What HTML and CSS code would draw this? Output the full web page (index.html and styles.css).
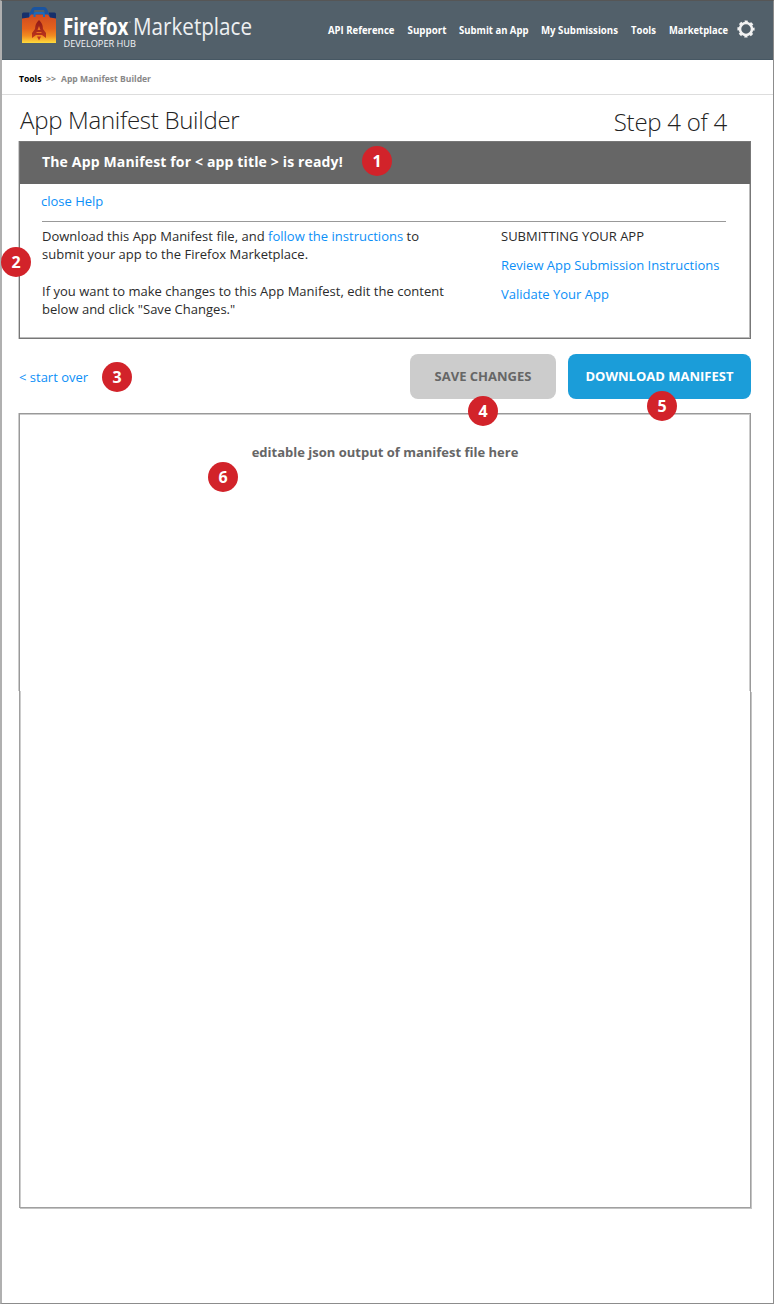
FILE: index.html
```html
<!DOCTYPE html>
<html lang="en">
<head>
<meta charset="utf-8">
<title>App Manifest Builder</title>
<link rel="stylesheet" href="styles.css">
</head>
<body>
<div class="page">
  <header class="masthead">
    <svg class="logo" width="240" height="50" viewBox="0 0 240 50">
      <defs>
        <linearGradient id="bag" x1="0" y1="0" x2="0" y2="1">
          <stop offset="0" stop-color="#cf4a20"/><stop offset=".5" stop-color="#e5631c"/><stop offset=".75" stop-color="#f28c20"/><stop offset="1" stop-color="#ffdc3c"/>
        </linearGradient>
        <linearGradient id="rocket" x1="0" y1="0" x2="0" y2="1">
          <stop offset="0" stop-color="#8e1a18"/><stop offset="1" stop-color="#c63a1c"/>
        </linearGradient>
      </defs>
      <path d="M1 14q0-1.500 1.500-1.500h6v7H1zM28 12.500h5.500q1.500 0 1.500 1.500v5.500h-7z" fill="#17306b"/>
      <path fill-rule="evenodd" d="M8 14.500l2.500-5.500q1-2 3-2h9.500q2 0 3 2l2.500 5.500v2.500h-20.500zM13.500 10l-1 2.500h11.500l-1-2.500z" fill="#1a54a0"/>
      <path d="M1 18.500l7-1 2-3h17l2 3 6 1v24.500h-34z" fill="url(#bag)"/>
      <path d="M13.500 17v-2.500q0-1.500 1.500-1.500h6.500q1.500 0 1.500 1.500v2.500" fill="none" stroke="#1a6abc" stroke-width="2"/>
      <path d="M18 20q4 3.500 4 9l3 4v5l-4-3h-6l-4 3v-5l3-4q0-5.500 4-9zM16 36.500h4l-2 4z" fill="url(#rocket)"/>
      <path d="M18 26l1.500 4h-3zM15.500 32h5v1h-5z" fill="#ed711f"/>
      <g class="logo-text">
        <text class="logo-bold" x="42" y="34.500" textLength="65.500" lengthAdjust="spacingAndGlyphs">Firefox</text>
        <text class="logo-thin" x="112" y="34.500" textLength="119" lengthAdjust="spacingAndGlyphs">Marketplace</text>
        <text class="logo-hub" x="42.500" y="46.500" textLength="72.500" lengthAdjust="spacingAndGlyphs">DEVELOPER HUB</text>
      </g>
      <circle cx="109" cy="22" r=".6" fill="#cdd3d8"/>
    </svg>
    <nav class="nav">
      <svg class="nav-text" width="404" height="20" viewBox="0 0 404 20">
        <text x="0" y="14" textLength="66.500" lengthAdjust="spacingAndGlyphs">API Reference</text>
        <text x="79.500" y="14" textLength="39" lengthAdjust="spacingAndGlyphs">Support</text>
        <text x="131" y="14" textLength="69.500" lengthAdjust="spacingAndGlyphs">Submit an App</text>
        <text x="213" y="14" textLength="77" lengthAdjust="spacingAndGlyphs">My Submissions</text>
        <text x="303" y="14" textLength="25" lengthAdjust="spacingAndGlyphs">Tools</text>
        <text x="341" y="14" textLength="59" lengthAdjust="spacingAndGlyphs">Marketplace</text>
      </svg>
      <svg class="gear" width="20" height="20" viewBox="0 0 20 20">
        <circle cx="10" cy="10" r="6" fill="none" stroke="#f2f2f2" stroke-width="2.500"/>
        <circle cx="10" cy="10" r="7.500" fill="none" stroke="#f2f2f2" stroke-width="2.200" stroke-dasharray="3.100 2.790" stroke-dashoffset="1.550"/>
      </svg>
    </nav>
  </header>

  <div class="crumbs">
    <svg width="140" height="16" viewBox="0 0 140 16">
      <text class="crumb-root" x="0" y="12" textLength="22.500" lengthAdjust="spacingAndGlyphs">Tools</text>
      <text class="crumb-sep" x="27" y="12" textLength="10" lengthAdjust="spacingAndGlyphs">&gt;&gt;</text>
      <text class="crumb-here" x="42" y="12" textLength="90" lengthAdjust="spacingAndGlyphs">App Manifest Builder</text>
    </svg>
  </div>

  <main class="content">
    <div class="title-row">
      <h1 class="title">App Manifest Builder</h1>
      <div class="step">Step 4 of 4</div>
    </div>

    <section class="panel">
      <h2 class="panel-head">The App Manifest for &lt; app title &gt; is ready!</h2>
      <span class="pin pin-1">1</span>
      <span class="pin pin-2">2</span>
      <div class="panel-body">
        <a class="link close">close Help</a>
        <div class="help">
          <div class="help-text">
            <p>Download this App Manifest file, and <a class="link">follow the instructions</a> to<br>submit your app to the Firefox Marketplace.</p>
            <p>If you want to make changes to this App Manifest, edit the content<br>below and click "Save Changes."</p>
          </div>
          <div class="help-links">
            <span>SUBMITTING YOUR APP</span>
            <a class="link">Review App Submission Instructions</a>
            <a class="link">Validate Your App</a>
          </div>
        </div>
      </div>
    </section>

    <div class="actions">
      <a class="link restart">&lt; start over<span class="pin pin-3">3</span></a>
      <div class="button save">SAVE CHANGES<span class="pin pin-4">4</span></div>
      <div class="button download">DOWNLOAD MANIFEST<span class="pin pin-5">5</span></div>
    </div>

    <section class="editor">
      <div class="editor-upper"><span class="placeholder">editable json output of manifest file here</span><span class="pin pin-6">6</span></div>
      <div class="editor-lower"></div>
    </section>
  </main>
</div>
</body>
</html>
```
FILE: styles.css
```css
* { box-sizing: border-box; }
body { margin: 0; background: #fff; color: #2b2b2b; font: 13px/18px "Open Sans", sans-serif; }
.page { height: 1304px; border-left: 2px solid #b0b0b0; border-right: 1px solid #8c8c8c; border-top: 1px solid #565656; border-bottom: 1px solid #8c8c8c; }

.masthead { height: 59px; display: flex; justify-content: space-between; background: #52606a; border-bottom: 1px solid #465763; }
.logo { margin: -1px 0 0 19px; overflow: visible; }
.logo-text { fill: #fff; font-family: "Open Sans", sans-serif; }
.logo-bold { font-size: 23px; font-weight: 700; }
.logo-thin { font-size: 23.500px; font-weight: 400; fill: #eef0f2; }
.logo-hub { font-size: 9px; fill: #f2f4f6; }
.nav { display: flex; padding: 18px 17px 0 0; }
.nav-text { margin-top: 1px; margin-right: 4px; fill: #fff; font: 700 11px "Open Sans", sans-serif; overflow: visible; }
.gear { flex: none; }

.crumbs { height: 35px; padding: 10px 0 0 17px; border-bottom: 1px solid #ddd; }
.crumbs svg { display: block; font: 700 9.500px "Open Sans", sans-serif; overflow: visible; }
.crumb-root { fill: #000; }
.crumb-sep { fill: #888; }
.crumb-here { fill: #888; }

.content { width: 732px; margin-left: 17px; }
.title-row { height: 46px; display: flex; justify-content: space-between; padding-right: 24px; }
.title, .step { margin: 0; font-weight: 300; white-space: nowrap; color: #222; }
.title { font-size: 24px; line-height: 34px; padding-top: 8px; padding-left: 1px; letter-spacing: -.28px; }
.step { font-size: 24px; line-height: 34px; padding-top: 10px; letter-spacing: -.25px; }

.panel { position: relative; height: 198px; border: 1px solid #777; box-shadow: -1px 0 #ccc, inset -1px -1px #bbb; }
.panel-head { margin: 0; height: 42px; padding-left: 22px; background: #666; color: #fff; font-size: 14px; line-height: 40px; font-weight: 700; letter-spacing: .15px; }
.panel-body { padding: 8px 24px 0 22px; }
.link { color: #0c8ff7; }
.close { display: block; height: 29px; margin-left: -1px; }
.help { display: flex; justify-content: space-between; border-top: 1px solid #999; padding-top: 5px; }
.help p { margin: 0 0 19px; white-space: nowrap; letter-spacing: .015px; }
.help-links { width: 225px; display: flex; flex-direction: column; gap: 11px; white-space: nowrap; }

.actions { position: relative; z-index: 1; height: 74px; display: flex; align-items: flex-start; padding-top: 15px; }
.restart { position: relative; flex: none; width: 391px; line-height: 46px; }
.button { position: relative; flex: none; height: 45px; line-height: 45px; border-radius: 8px; text-align: center; font-weight: 700; white-space: nowrap; }
.save { width: 146px; background: #ccc; color: #666; margin-right: 12px; }
.download { width: 183px; background: #1b9dd9; color: #fff; }

.editor-upper { position: relative; height: 278px; border: 1px solid #999; border-bottom: 0; box-shadow: -1px 0 #ccc, inset -1px 1px #ccc; text-align: center; padding-top: 29px; font-weight: 700; color: #666; }
.editor-lower { height: 517px; border: 1px solid #a0a0a0; border-top: 0; box-shadow: inset 1px 0 #ccc, 1px 1px #c4c4c4; }

.pin { position: absolute; width: 30px; height: 30px; border-radius: 50%; background: #d2232a; color: #fff; text-align: center; font: 700 16px/31px "Noto Sans", sans-serif; }
.pin-1 { left: 342px; top: 4px; }
.pin-2 { left: -19px; top: 105px; }
.pin-3 { left: 83px; top: 8px; }
.pin-4 { left: 58px; top: 42px; }
.pin-5 { left: 79px; top: 37px; }
.pin-6 { left: 188px; top: 48px; }
```
